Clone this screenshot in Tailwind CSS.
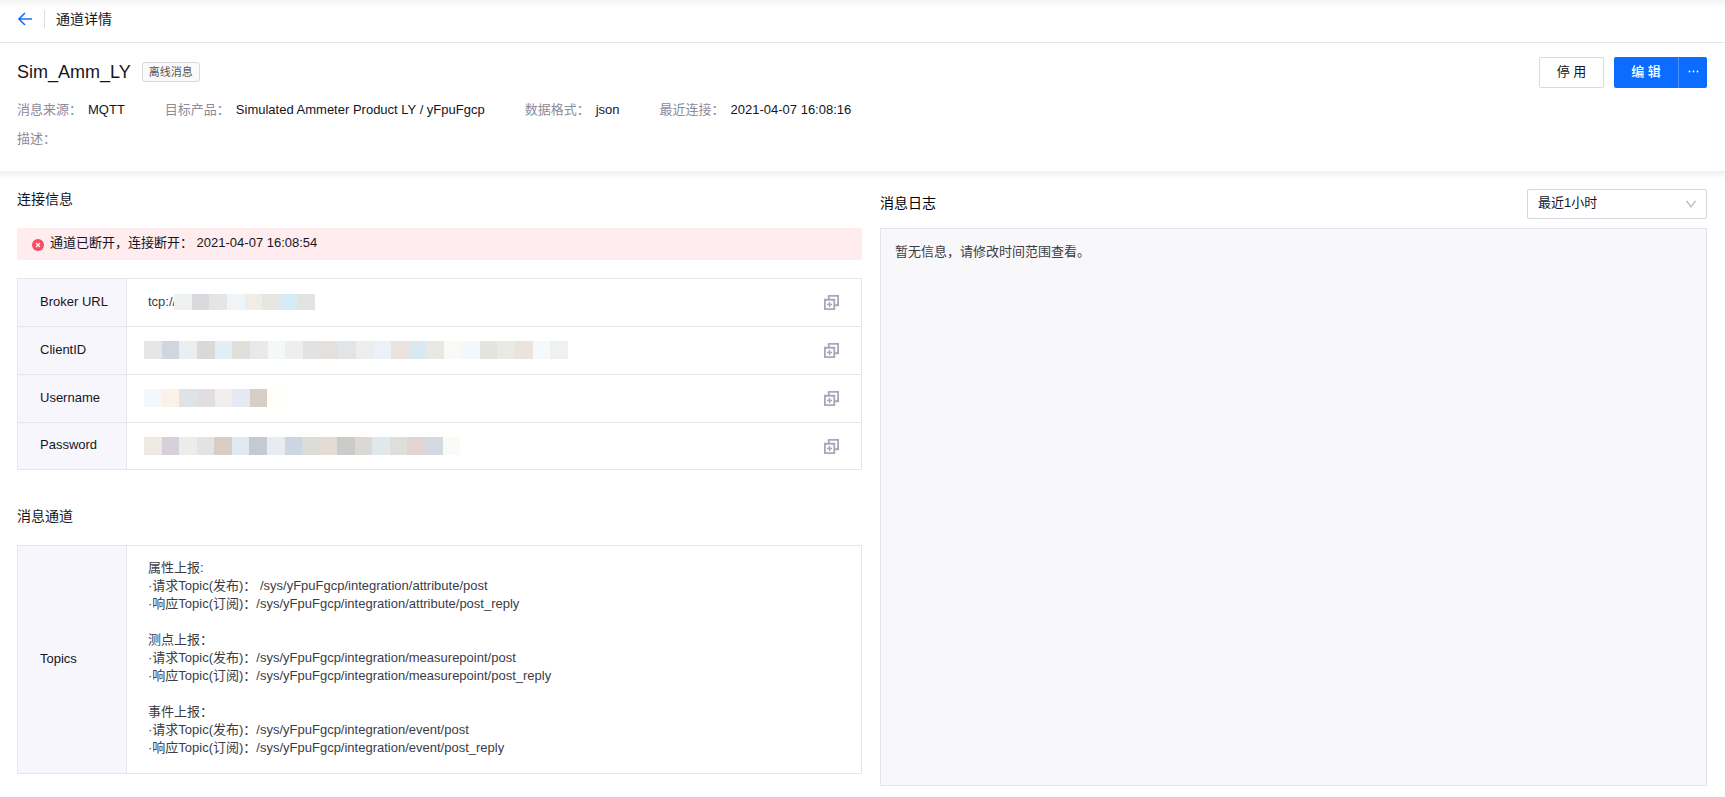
<!DOCTYPE html>
<html lang="zh-CN">
<head>
<meta charset="utf-8">
<meta name="viewport" content="width=device-width, initial-scale=1">
<title>通道详情</title>
<script src="https://cdn.jsdelivr.net/npm/@tailwindcss/browser@4"></script>
</head>
<body class="flex min-h-screen flex-col bg-white font-['Liberation_Sans','Noto_Sans_CJK_SC',sans-serif] text-[13px] leading-[18px] text-[#15151f]">
<svg class="hidden" aria-hidden="true">
  <symbol id="copy" viewBox="0 0 15 15">
    <path d="M4.750 4V.9h9.350v9.350H11M.9 4.750h9.350v9.350H.9z" fill="none" stroke="#a6a8b8" stroke-width="1.8"/>
    <path d="M5.500 7v5M3 9.500h5" stroke="#a6a8b8" stroke-width="1.6"/>
  </symbol>
</svg>

<header class="flex h-[43px] items-center border-b border-[#e5e5e5] bg-linear-to-b from-[#f4f4f4] to-white to-20% pb-1 pl-[18px]">
  <a href="#" aria-label="返回" class="block">
    <svg class="size-[14px]" viewBox="0 0 14 14" fill="none" stroke="#1a6dff" stroke-width="1.6"><path d="M7 1 1 7l6 6M1 7h13"/></svg>
  </a>
  <span class="ml-3 h-[18px] w-px bg-[#dcdcdc]"></span>
  <h1 class="ml-[11px] text-sm">通道详情</h1>
</header>

<section class="flex h-32 justify-between pt-[14px] pr-[18px] pl-[17px]">
  <div>
    <div class="flex h-[30px] items-center gap-[11px]">
      <h2 class="text-lg">Sim_Amm_LY</h2>
      <span class="flex h-5 items-center rounded-[3px] border border-[#d9d9d9] bg-[#fafafa] px-1.5 text-[11px] text-[#555]">离线消息</span>
    </div>
    <dl class="mt-[14px] flex flex-wrap gap-x-10 gap-y-[11px]">
      <div class="flex gap-[6px]"><dt class="text-[#8b8b9b]">消息来源：</dt><dd>MQTT</dd></div>
      <div class="flex gap-[6px]"><dt class="text-[#8b8b9b]">目标产品：</dt><dd>Simulated Ammeter Product LY / yFpuFgcp</dd></div>
      <div class="flex gap-[6px]"><dt class="text-[#8b8b9b]">数据格式：</dt><dd>json</dd></div>
      <div class="flex gap-[6px]"><dt class="text-[#8b8b9b]">最近连接：</dt><dd>2021-04-07 16:08:16</dd></div>
      <div class="flex w-full"><dt class="text-[#8b8b9b]">描述：</dt><dd></dd></div>
    </dl>
  </div>
  <div class="flex h-[31px]">
    <button class="w-[65px] rounded-xs border border-[#d9dae0] pb-0.5">停 用</button>
    <button class="ml-[10px] w-16 rounded-l-xs bg-[#0b6cff] pb-0.5 font-medium text-white">编 辑</button>
    <button aria-label="更多" class="flex w-[29px] items-center justify-center rounded-r-xs border-l border-[#4a92ff] bg-[#0b6cff] pb-0.5">
      <svg class="h-[3px] w-[11px]" viewBox="0 0 11 3" fill="#fff"><circle cx="1.5" cy="1.5" r=".9"/><circle cx="5.5" cy="1.5" r=".9"/><circle cx="9.5" cy="1.5" r=".9"/></svg>
    </button>
  </div>
</section>

<main class="grid flex-1 grid-cols-[845fr_827fr] gap-[18px] bg-linear-to-b from-[#f0f0f0] to-white to-[8px] pr-[18px] pb-[11px] pl-[17px]">
  <section class="min-w-0 pt-[19px]">
    <h3 class="text-sm leading-[18px]">连接信息</h3>
    <div role="alert" class="mt-5 flex h-8 items-center rounded-xs bg-[#ffecee] pl-[15px]">
      <svg class="mt-px size-[12px]" viewBox="0 0 12 12"><circle cx="6" cy="6" r="6" fill="#fb4b60"/><path d="m4 4 4 4M8 4 4 8" stroke="#fff" stroke-width="1.2"/></svg>
      <span class="ml-[6px] pb-0.5">通道已断开，连接断开： 2021-04-07 16:08:54</span>
    </div>

    <table class="mt-[18px] w-full border-collapse border border-[#e5e6e9]">
      <tbody>
        <tr class="h-12 border-b border-[#e5e6e9]">
          <th scope="row" class="w-[109px] border-r border-[#e5e6e9] bg-[#f6f6fc] pb-0.5 pl-[22px] text-left font-normal">Broker URL</th>
          <td class="pb-0.5 pl-[21px]"><div class="flex items-center text-[#3c3c46]"><span class="w-[26px]">tcp://</span>
            <div class="flex h-4 w-[141px] *:flex-1"><i class="bg-[#edf2ef]"></i><i class="bg-[#d9d9de]"></i><i class="bg-[#e6e5e4]"></i><i class="bg-[#eff4f8]"></i><i class="bg-[#f2ece6]"></i><i class="bg-[#e6e7e1]"></i><i class="bg-[#d7eaf7]"></i><i class="bg-[#e3e3e3]"></i></div></div></td>
          <td class="w-[38px]"><button aria-label="复制 Broker URL" class="block"><svg class="size-[15px]"><use href="#copy"/></svg></button></td>
        </tr>
        <tr class="h-12 border-b border-[#e5e6e9]">
          <th scope="row" class="border-r border-[#e5e6e9] bg-[#f6f6fc] pb-0.5 pl-[22px] text-left font-normal">ClientID</th>
          <td class="pb-0.5 pl-[17px]"><div class="flex h-[18px] w-[424px] *:flex-1"><i class="bg-[#e6e6e4]"></i><i class="bg-[#d1d5df]"></i><i class="bg-[#e9eeee]"></i><i class="bg-[#d9dad5]"></i><i class="bg-[#e2eef5]"></i><i class="bg-[#e2dfda]"></i><i class="bg-[#e7e9eb]"></i><i class="bg-[#f4f8f7]"></i><i class="bg-[#efeeec]"></i><i class="bg-[#e2e2e3]"></i><i class="bg-[#e4e0dd]"></i><i class="bg-[#e1e5e8]"></i><i class="bg-[#ededed]"></i><i class="bg-[#ebf0f9]"></i><i class="bg-[#ebe2e0]"></i><i class="bg-[#dae8f0]"></i><i class="bg-[#e8e9e4]"></i><i class="bg-[#f9faf5]"></i><i class="bg-[#f3f8fc]"></i><i class="bg-[#e4e3df]"></i><i class="bg-[#e9eae5]"></i><i class="bg-[#ece3dc]"></i><i class="bg-[#f5f9fd]"></i><i class="bg-[#eff1f1]"></i></div></td>
          <td><button aria-label="复制 ClientID" class="block"><svg class="size-[15px]"><use href="#copy"/></svg></button></td>
        </tr>
        <tr class="h-12 border-b border-[#e5e6e9]">
          <th scope="row" class="border-r border-[#e5e6e9] bg-[#f6f6fc] pb-0.5 pl-[22px] text-left font-normal">Username</th>
          <td class="pb-0.5 pl-[17px]"><div class="flex h-[18px] w-[141px] *:flex-1"><i class="bg-[#f3f8fc]"></i><i class="bg-[#faf2e6]"></i><i class="bg-[#dee4e6]"></i><i class="bg-[#e2dde1]"></i><i class="bg-[#f0efeb]"></i><i class="bg-[#e4e9f3]"></i><i class="bg-[#d7cec5]"></i><i class="bg-[#fffefa]"></i></div></td>
          <td><button aria-label="复制 Username" class="block"><svg class="size-[15px]"><use href="#copy"/></svg></button></td>
        </tr>
        <tr class="h-[47px]">
          <th scope="row" class="border-r border-[#e5e6e9] bg-[#f6f6fc] pb-0.5 pl-[22px] text-left font-normal">Password</th>
          <td class="pl-[17px]"><div class="flex h-[18px] w-[316px] *:flex-1"><i class="bg-[#eceae2]"></i><i class="bg-[#d6d0dc]"></i><i class="bg-[#ecedeb]"></i><i class="bg-[#e3e3e3]"></i><i class="bg-[#d9ccc2]"></i><i class="bg-[#e1e9f0]"></i><i class="bg-[#c4cad4]"></i><i class="bg-[#e9ebee]"></i><i class="bg-[#cad6e1]"></i><i class="bg-[#dbdbd7]"></i><i class="bg-[#e3dbd4]"></i><i class="bg-[#cbcbc9]"></i><i class="bg-[#dcd8d6]"></i><i class="bg-[#e0e8eb]"></i><i class="bg-[#dedfdd]"></i><i class="bg-[#e2d4d0]"></i><i class="bg-[#d3dae2]"></i><i class="bg-[#fafaf6]"></i></div></td>
          <td><button aria-label="复制 Password" class="block"><svg class="size-[15px]"><use href="#copy"/></svg></button></td>
        </tr>
      </tbody>
    </table>

    <h3 class="mt-[37px] text-sm leading-[18px]">消息通道</h3>
    <table class="mt-5 w-full border-collapse border border-[#e5e6e9]">
      <tbody>
        <tr>
          <th scope="row" class="w-[109px] border-r border-[#e5e6e9] bg-[#f6f6fc] pb-0.5 pl-[22px] text-left font-normal">Topics</th>
          <td class="pt-[13px] pb-4 pl-[21px] text-[#3c3c46]">
            <p>属性上报:</p>
            <p>·请求Topic(发布)： /sys/yFpuFgcp/integration/attribute/post</p>
            <p>·响应Topic(订阅)：/sys/yFpuFgcp/integration/attribute/post_reply</p>
            <p class="mt-[18px]">测点上报：</p>
            <p>·请求Topic(发布)：/sys/yFpuFgcp/integration/measurepoint/post</p>
            <p>·响应Topic(订阅)：/sys/yFpuFgcp/integration/measurepoint/post_reply</p>
            <p class="mt-[18px]">事件上报：</p>
            <p>·请求Topic(发布)：/sys/yFpuFgcp/integration/event/post</p>
            <p>·响应Topic(订阅)：/sys/yFpuFgcp/integration/event/post_reply</p>
          </td>
        </tr>
      </tbody>
    </table>
  </section>

  <section class="flex min-w-0 flex-col pt-[18px]">
    <div class="flex h-[30px] items-center justify-between">
      <h3 class="pb-0.5 text-sm leading-[18px] text-black">消息日志</h3>
      <div class="relative">
        <select aria-label="时间范围" class="block h-[30px] w-[180px] appearance-none rounded-xs border border-[#d5d6de] bg-white pb-0.5 pl-[10px]">
          <option>最近1小时</option>
        </select>
        <svg class="pointer-events-none absolute top-[11px] right-[11px] h-2 w-[10px]" viewBox="0 0 10 8" fill="none" stroke="#b0b1bd" stroke-width="1.2"><path d="m.5.8 4.5 6 4.500-6"/></svg>
      </div>
    </div>
    <div class="mt-[9px] flex-1 border border-[#e2e3eb] bg-[#f8f8fb] px-[14px] py-[14px] text-[#3c3c46]">暂无信息，请修改时间范围查看。</div>
  </section>
</main>
</body>
</html>
